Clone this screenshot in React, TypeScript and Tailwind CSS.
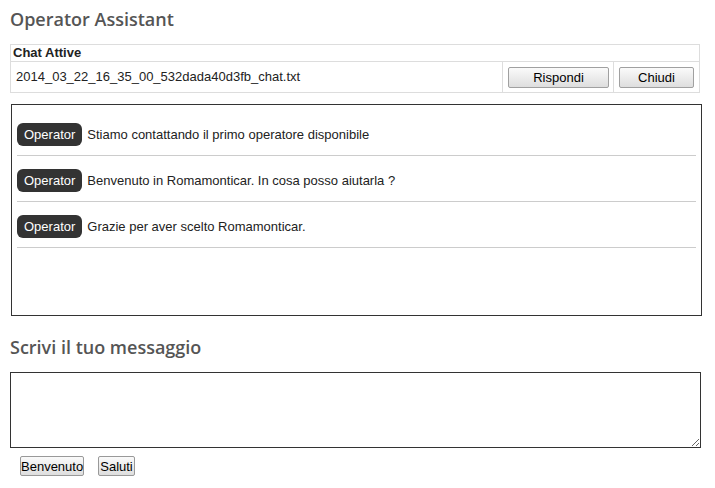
import React from 'react';

const messages = [
  'Stiamo contattando il primo operatore disponibile',
  'Benvenuto in Romamonticar. In cosa posso aiutarla ?',
  'Grazie per aver scelto Romamonticar.',
];

const btn =
  'h-[21px] border border-[#a0a0a0] rounded-[2px] bg-gradient-to-b from-[#fafafa] to-[#dedede] text-[13px] text-black leading-none';

const smallBtn =
  'h-[20px] px-0 border border-[#999] rounded-[2px] bg-gradient-to-b from-[#fafafa] to-[#dedede] text-[13px] text-black leading-none';

export default function App() {
  return (
    <div className="px-[10px] pt-[7px] font-['Liberation_Sans',Arial,sans-serif] text-[13px] text-[#222]">
      <h2 className="font-['Open_Sans',sans-serif] font-semibold text-[18px] leading-[24px] text-[#555]">
        Operator Assistant
      </h2>

      <div className="mt-[13px] w-[690px] border border-[#ddd]">
        <div className="h-[17px] border-b border-[#ddd] pl-[2px] font-bold leading-[16px]">Chat Attive</div>
        <div className="flex h-[30px]">
          <div className="w-[492px] border-r border-[#ddd] pl-[5px] flex items-center">
            2014_03_22_16_35_00_532dada40d3fb_chat.txt
          </div>
          <div className="w-[111px] border-r border-[#ddd] pl-[5px] flex items-center">
            <button className={`${btn} w-[101px]`}>Rispondi</button>
          </div>
          <div className="flex-1 pl-[5px] flex items-center">
            <button className={`${btn} w-[75px]`}>Chiudi</button>
          </div>
        </div>
      </div>

      <div className="mt-[11px] ml-px w-[691px] h-[212px] border border-[#333] pt-[5px] px-[5px]">
        {messages.map((m) => (
          <div key={m} className="flex items-center gap-[5px] pt-[13px] pb-[9px] border-b border-[#ccc]">
            <span className="h-[23px] px-[7px] flex items-center rounded-[6px] bg-[#333] text-white">Operator</span>
            <span>{m}</span>
          </div>
        ))}
      </div>

      <h2 className="mt-[19px] font-['Open_Sans',sans-serif] font-semibold text-[18px] leading-[24px] text-[#555]">
        Scrivi il tuo messaggio
      </h2>

      <textarea className="block mt-[13px] w-[691px] h-[76px] border border-[#333] outline-none" />

      <div className="mt-[8px] ml-[10px] flex gap-[14px]">
        <button className={`${smallBtn} w-[64px]`}>Benvenuto</button>
        <button className={`${smallBtn} w-[37px]`}>Saluti</button>
      </div>
    </div>
  );
}
